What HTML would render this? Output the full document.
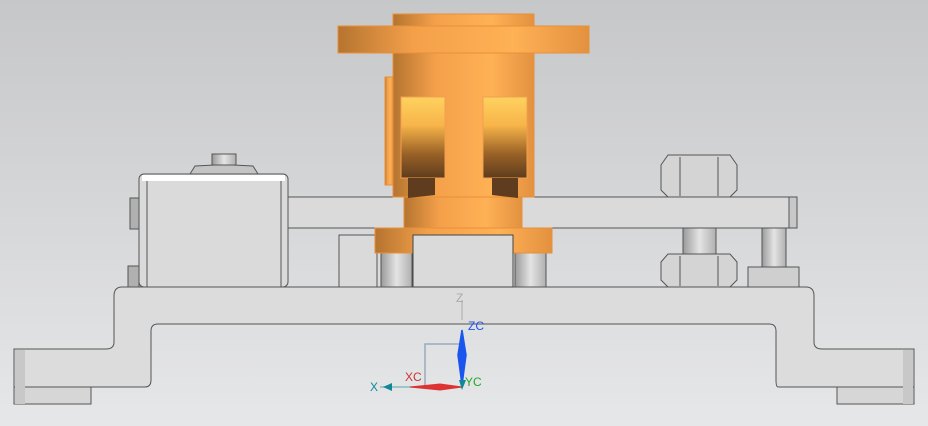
<!DOCTYPE html>
<html><head><style>
html,body{margin:0;padding:0;width:928px;height:426px;overflow:hidden}
svg{display:block}
text{font-family:"Liberation Sans",sans-serif;font-size:12px}
</style></head><body>
<svg width="928" height="426" viewBox="0 0 928 426" xmlns="http://www.w3.org/2000/svg">
<defs>
<linearGradient id="bg" x1="0" y1="0" x2="0" y2="1"><stop offset="0" stop-color="#c6c7c9"/><stop offset="1" stop-color="#e6e7e9"/></linearGradient>
<linearGradient id="or" x1="0" y1="0" x2="1" y2="0"><stop offset="0" stop-color="#b57430"/><stop offset="0.3" stop-color="#f4a04a"/><stop offset="0.7" stop-color="#ffb155"/><stop offset="1" stop-color="#e3913f"/></linearGradient>
<linearGradient id="win" x1="0" y1="0" x2="0" y2="1"><stop offset="0" stop-color="#ffd25e"/><stop offset="0.35" stop-color="#f7b44a"/><stop offset="0.7" stop-color="#9a6226"/><stop offset="1" stop-color="#5e3c1d"/></linearGradient>
<linearGradient id="pin" x1="0" y1="0" x2="1" y2="0"><stop offset="0" stop-color="#9a9a9a"/><stop offset="0.5" stop-color="#e4e4e4"/><stop offset="1" stop-color="#b0b0b0"/></linearGradient>
</defs>
<rect width="928" height="426" fill="url(#bg)"/>
<g stroke="#555" stroke-width="1" fill="#dadada">
<!-- base plate -->
<path d="M114 296 Q114 287 122 287 L806 287 Q814 287 814 296 L814 342 Q814 349 822 349 L914 349 L914 387 L778 387 Q776 387 776 380 L776 331 Q776 324 769 324 L158 324 Q151 324 151 331 L151 380 Q151 387 145 387 L14 387 L14 349 L106 349 Q114 349 114 342 Z" fill="#dcdcdc"/>
<rect x="14" y="387" width="77" height="17" fill="#d6d6d6"/>
<rect x="837" y="387" width="77" height="17" fill="#d6d6d6"/>
<rect x="15" y="350" width="10" height="54" fill="#c8c8c8" stroke="none"/>
<rect x="903" y="350" width="10" height="54" fill="#c8c8c8" stroke="none"/>
<!-- right rod (behind bar) -->
<rect x="683" y="160" width="33" height="100" fill="url(#pin)"/>
<rect x="762" y="220" width="24" height="48" fill="url(#pin)"/>
<!-- bars -->
<rect x="288" y="197" width="116" height="31"/>
<rect x="522" y="197" width="275" height="31"/>
<rect x="789" y="197" width="8" height="31" fill="#c8c8c8"/>
<!-- left block -->
<rect x="130" y="198" width="9" height="31" fill="#b0b0b0"/>
<rect x="128" y="266" width="11" height="21" fill="#b0b0b0"/>
<path d="M190 174 L195 166 L215 165 L233 165 L253 166 L258 174 Z" fill="#c4c4c4"/>
<rect x="212" y="154" width="24" height="11" fill="url(#pin)"/>
<rect x="139" y="174" width="149" height="113" rx="5" fill="#dadada"/>
<rect x="142" y="175" width="143" height="6" fill="#fff" stroke="none"/>
<line x1="147" y1="181" x2="147" y2="287"/><line x1="281" y1="181" x2="281" y2="287"/>
<!-- blocks under orange -->
<rect x="339" y="235" width="38" height="52"/>
<rect x="413" y="235" width="100" height="52"/>
<!-- nuts -->
<path d="M661 165 L668 155 L730 155 L737 165 L737 190 L730 197 L668 197 L661 190 Z" fill="#d4d4d4"/>
<line x1="680" y1="157" x2="680" y2="196"/><line x1="718" y1="157" x2="718" y2="196"/>
<path d="M661 262 L668 254 L730 254 L737 262 L737 280 L730 287 L668 287 L661 280 Z" fill="#d4d4d4"/>
<line x1="680" y1="256" x2="680" y2="286"/><line x1="718" y1="256" x2="718" y2="286"/>
<rect x="748" y="267" width="51" height="20" fill="#cfcfcf"/>
<!-- pins -->
<rect x="381" y="253" width="31" height="34" fill="url(#pin)"/>
<rect x="515" y="253" width="31" height="34" fill="url(#pin)"/>
</g>
<!-- orange part -->
<g fill="url(#or)" stroke="#e8903a" stroke-width="1">
<rect x="375" y="228" width="177" height="25"/>
<rect x="404" y="197" width="118" height="31"/>
<rect x="393" y="53" width="141" height="144"/>
<rect x="385" y="77" width="8" height="108"/>
<rect x="338" y="26" width="251" height="27"/>
<rect x="393" y="14" width="141" height="12"/>
</g>
<rect x="413" y="235" width="100" height="52" fill="#dadada" stroke="#444"/>
<rect x="401" y="97" width="44" height="81" fill="url(#win)" stroke="#f0a050"/>
<rect x="483" y="97" width="44" height="81" fill="url(#win)" stroke="#f0a050"/>
<path d="M408 178 L435 178 L435 195 L408 198 Z" fill="#5e3c1d"/>
<path d="M492 178 L518 178 L518 198 L492 195 Z" fill="#5e3c1d"/>
<!-- triad -->
<g stroke-width="1.5" fill="none">
<path d="M425 385 L425 344 L462 344" stroke="#9ab"/>
<line x1="462" y1="300" x2="462" y2="320" stroke="#bbb"/>
<path d="M462 330 L458 355 L462 385 L466 355 Z" fill="#1a55ee" stroke="#1a55ee"/>
<line x1="380" y1="387" x2="462" y2="387" stroke="#8bb"/>
<path d="M410 387 L440 384 L462 387 L440 390 Z" fill="#d33" stroke="#d33" stroke-width="1"/>
<path d="M383 387 L392 383 L392 391 Z" fill="#189" stroke="none"/>
<path d="M459 380 L466 380 L462 390 Z" fill="#189" stroke="none"/>
</g>
<text x="456" y="302" fill="#aaa">Z</text>
<text x="468" y="330" fill="#2255ee">ZC</text>
<text x="405" y="381" fill="#cc3333">XC</text>
<text x="370" y="391" fill="#189">X</text>
<text x="465" y="386" fill="#2a2">YC</text>
</svg>
</body></html>
